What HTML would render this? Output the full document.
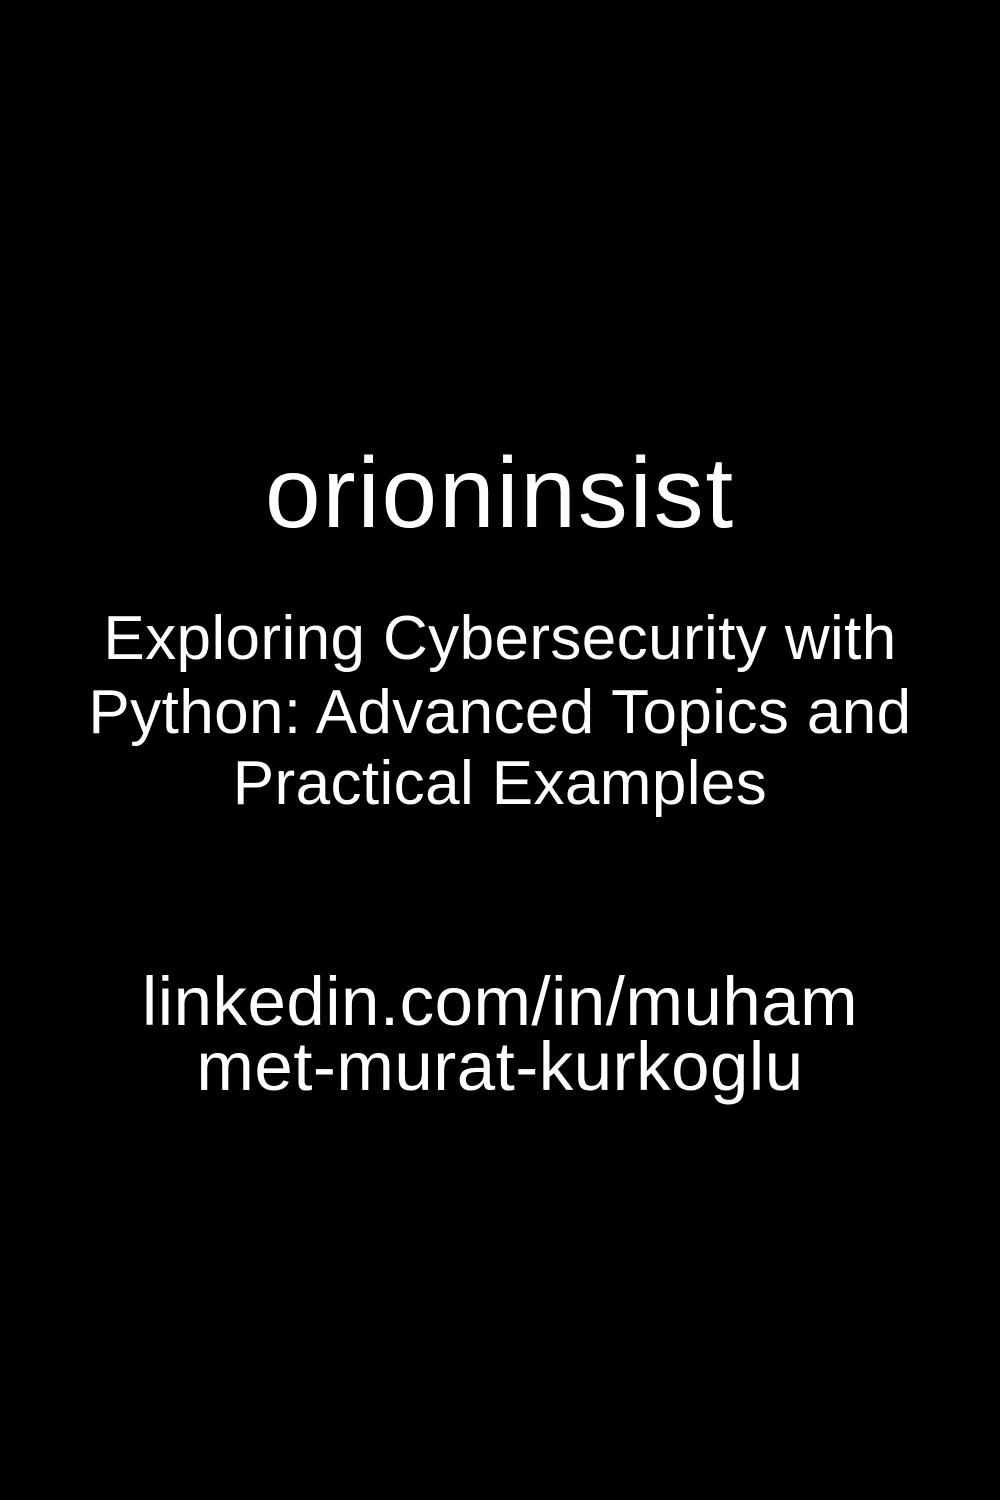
<!DOCTYPE html>
<html><head><meta charset="utf-8"><style>
html,body{margin:0;padding:0;background:#000;}
body{width:1000px;height:1500px;position:relative;overflow:hidden;font-family:"Liberation Sans",sans-serif;color:#fff;}
.l{position:absolute;left:0;width:1000px;text-align:center;line-height:1;white-space:nowrap;}
</style></head><body>
<div class="l" style="font-size:100px;top:443px;letter-spacing:1.8px;">orioninsist</div>
<div class="l" style="font-size:62px;top:608px;letter-spacing:0.4px;">Exploring Cybersecurity with</div>
<div class="l" style="font-size:62px;top:682px;letter-spacing:0.4px;">Python: Advanced Topics and</div>
<div class="l" style="font-size:62px;top:753px;letter-spacing:0.4px;">Practical Examples</div>
<div class="l" style="font-size:69px;top:967px;letter-spacing:0.5px;">linkedin.com/in/muham</div>
<div class="l" style="font-size:69px;top:1032px;letter-spacing:0.5px;">met-murat-kurkoglu</div>
</body></html>
